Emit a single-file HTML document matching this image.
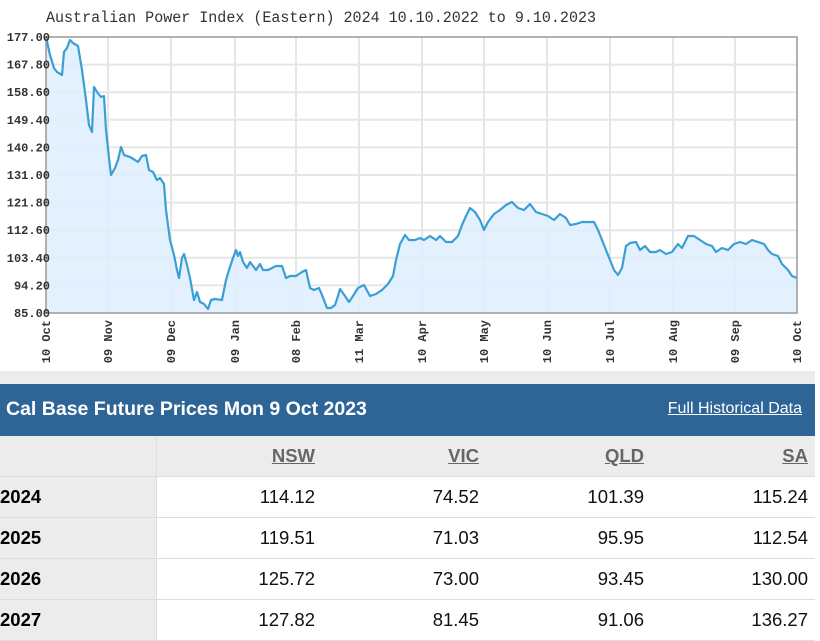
<!DOCTYPE html>
<html><head><style>
body{margin:0;width:820px;height:635px;overflow:hidden;background:#fff;font-family:"Liberation Sans",Arial,sans-serif;}
.chart{position:absolute;left:0;top:0;width:809px;height:371px;background:#fff;}
.gap{position:absolute;left:0;top:371px;width:815px;height:13px;background:#ececec;}
.hdr{position:absolute;left:0;top:384px;width:815px;height:52px;background:#2f6596;color:#fff;}
.hdr .t{position:absolute;left:6px;top:14px;font-size:19.5px;font-weight:bold;}
.hdr .l{position:absolute;right:13px;top:16px;font-size:16px;text-decoration:underline;}
table{position:absolute;left:0;top:436px;width:815px;border-collapse:collapse;font-size:18.5px;table-layout:fixed;}
td{height:40px;border-bottom:1px solid #ddd;text-align:right;padding:0 7px 0 0;color:#111;background:#fff;}
td.y{text-align:left;font-weight:bold;background:#ececec;padding:0;border-right:1px solid #ddd;color:#000;}
tr.h td{background:#ececec;color:#666;font-weight:bold;text-decoration:underline;}
</style></head><body>
<div class="chart">
<svg width="809" height="371" xmlns="http://www.w3.org/2000/svg" font-family="Liberation Mono,DejaVu Sans Mono,monospace">
<text x="46" y="22" font-size="15.5" fill="#333" textLength="550" lengthAdjust="spacingAndGlyphs">Australian Power Index (Eastern) 2024 10.10.2022 to 9.10.2023</text>
<g stroke="#e6e6e6" stroke-width="2">
<line x1="46" y1="64.6" x2="797" y2="64.6"/><line x1="46" y1="92.2" x2="797" y2="92.2"/><line x1="46" y1="119.8" x2="797" y2="119.8"/><line x1="46" y1="147.4" x2="797" y2="147.4"/><line x1="46" y1="175" x2="797" y2="175"/><line x1="46" y1="202.6" x2="797" y2="202.6"/><line x1="46" y1="230.2" x2="797" y2="230.2"/><line x1="46" y1="257.8" x2="797" y2="257.8"/><line x1="46" y1="285.4" x2="797" y2="285.4"/>
<line x1="108" y1="37" x2="108" y2="313"/><line x1="171" y1="37" x2="171" y2="313"/><line x1="235" y1="37" x2="235" y2="313"/><line x1="296" y1="37" x2="296" y2="313"/><line x1="359" y1="37" x2="359" y2="313"/><line x1="422" y1="37" x2="422" y2="313"/><line x1="484" y1="37" x2="484" y2="313"/><line x1="547" y1="37" x2="547" y2="313"/><line x1="610" y1="37" x2="610" y2="313"/><line x1="673" y1="37" x2="673" y2="313"/><line x1="735" y1="37" x2="735" y2="313"/>
</g>
<polygon fill="#ddeefd" fill-opacity="0.85" points="46,313 46,37 50,55 54,68 57,72 62,75 64,52 67,48 70,40 73,43 78,46 82,70 86,100 89,125 92,132 94,87 97,92 101,97 104,96 106,130 109,158 111,175 115,168 118,160 121,147 124,155 130,157 135,160 138,162 142,156 146,155 149,170 153,172 157,180 160,178 164,184 166,210 170,240 174,255 177,270 179,278 182,258 184,254 187,265 190,278 194,300 197,292 200,302 204,304 208,309 211,300 215,299 222,300 226,280 229,270 233,258 236,250 238,256 240,252 243,262 247,268 250,262 256,270 260,264 263,270 268,270 276,266 282,266 286,278 290,276 296,276 302,272 306,270 310,288 314,290 319,288 322,295 327,308 331,308 335,305 338,296 340,289 345,296 349,302 353,296 358,288 364,285 370,296 376,294 382,290 388,284 393,276 396,260 400,244 405,235 409,240 415,240 420,238 424,240 430,236 436,240 440,236 446,242 452,242 458,236 462,225 466,216 470,208 475,212 480,220 484,230 488,222 494,214 500,210 506,205 512,202 518,208 524,210 530,204 536,212 542,214 548,216 554,220 560,214 566,218 570,225 576,224 582,222 588,222 594,222 598,230 602,240 606,250 610,260 614,270 618,275 622,268 626,246 630,243 636,242 640,250 645,246 650,252 656,252 660,250 666,254 672,252 678,244 682,248 688,236 694,236 700,240 706,244 712,246 716,252 722,248 728,250 734,244 740,242 746,244 752,240 758,242 764,244 768,250 772,254 778,256 782,264 788,270 792,276 797,278 797,313"/>
<polyline fill="none" stroke="#3a9fd4" stroke-width="2.2" stroke-linejoin="round" points="46,37 50,55 54,68 57,72 62,75 64,52 67,48 70,40 73,43 78,46 82,70 86,100 89,125 92,132 94,87 97,92 101,97 104,96 106,130 109,158 111,175 115,168 118,160 121,147 124,155 130,157 135,160 138,162 142,156 146,155 149,170 153,172 157,180 160,178 164,184 166,210 170,240 174,255 177,270 179,278 182,258 184,254 187,265 190,278 194,300 197,292 200,302 204,304 208,309 211,300 215,299 222,300 226,280 229,270 233,258 236,250 238,256 240,252 243,262 247,268 250,262 256,270 260,264 263,270 268,270 276,266 282,266 286,278 290,276 296,276 302,272 306,270 310,288 314,290 319,288 322,295 327,308 331,308 335,305 338,296 340,289 345,296 349,302 353,296 358,288 364,285 370,296 376,294 382,290 388,284 393,276 396,260 400,244 405,235 409,240 415,240 420,238 424,240 430,236 436,240 440,236 446,242 452,242 458,236 462,225 466,216 470,208 475,212 480,220 484,230 488,222 494,214 500,210 506,205 512,202 518,208 524,210 530,204 536,212 542,214 548,216 554,220 560,214 566,218 570,225 576,224 582,222 588,222 594,222 598,230 602,240 606,250 610,260 614,270 618,275 622,268 626,246 630,243 636,242 640,250 645,246 650,252 656,252 660,250 666,254 672,252 678,244 682,248 688,236 694,236 700,240 706,244 712,246 716,252 722,248 728,250 734,244 740,242 746,244 752,240 758,242 764,244 768,250 772,254 778,256 782,264 788,270 792,276 797,278"/>
<rect x="46" y="37" width="751" height="276" fill="none" stroke="#999" stroke-width="1.5"/>
<g font-size="12" font-weight="bold" fill="#333" text-anchor="end">
<text x="50" y="41">177.00</text><text x="50" y="68.6">167.80</text><text x="50" y="96.2">158.60</text><text x="50" y="123.8">149.40</text><text x="50" y="151.4">140.20</text><text x="50" y="179">131.00</text><text x="50" y="206.6">121.80</text><text x="50" y="234.2">112.60</text><text x="50" y="261.8">103.40</text><text x="50" y="289.4">94.20</text><text x="50" y="317">85.00</text>
</g>
<g font-size="12" font-weight="bold" fill="#333" text-anchor="end">
<text transform="translate(50,320) rotate(-90)">10 Oct</text>
<text transform="translate(112,320) rotate(-90)">09 Nov</text>
<text transform="translate(175,320) rotate(-90)">09 Dec</text>
<text transform="translate(239,320) rotate(-90)">09 Jan</text>
<text transform="translate(300,320) rotate(-90)">08 Feb</text>
<text transform="translate(363,320) rotate(-90)">11 Mar</text>
<text transform="translate(426,320) rotate(-90)">10 Apr</text>
<text transform="translate(488,320) rotate(-90)">10 May</text>
<text transform="translate(551,320) rotate(-90)">10 Jun</text>
<text transform="translate(614,320) rotate(-90)">10 Jul</text>
<text transform="translate(677,320) rotate(-90)">10 Aug</text>
<text transform="translate(739,320) rotate(-90)">09 Sep</text>
<text transform="translate(801,320) rotate(-90)">10 Oct</text>
</g>
</svg>
</div>
<div class="gap"></div>
<div class="hdr"><span class="t">Cal Base Future Prices Mon 9 Oct 2023</span><span class="l">Full Historical Data</span></div>
<table>
<colgroup><col style="width:156px"><col style="width:166px"><col style="width:164px"><col style="width:165px"><col style="width:164px"></colgroup>
<tr class="h"><td class="y"></td><td>NSW</td><td>VIC</td><td>QLD</td><td>SA</td></tr>
<tr><td class="y">2024</td><td>114.12</td><td>74.52</td><td>101.39</td><td>115.24</td></tr>
<tr><td class="y">2025</td><td>119.51</td><td>71.03</td><td>95.95</td><td>112.54</td></tr>
<tr><td class="y">2026</td><td>125.72</td><td>73.00</td><td>93.45</td><td>130.00</td></tr>
<tr><td class="y">2027</td><td>127.82</td><td>81.45</td><td>91.06</td><td>136.27</td></tr>
</table>
</body></html>
